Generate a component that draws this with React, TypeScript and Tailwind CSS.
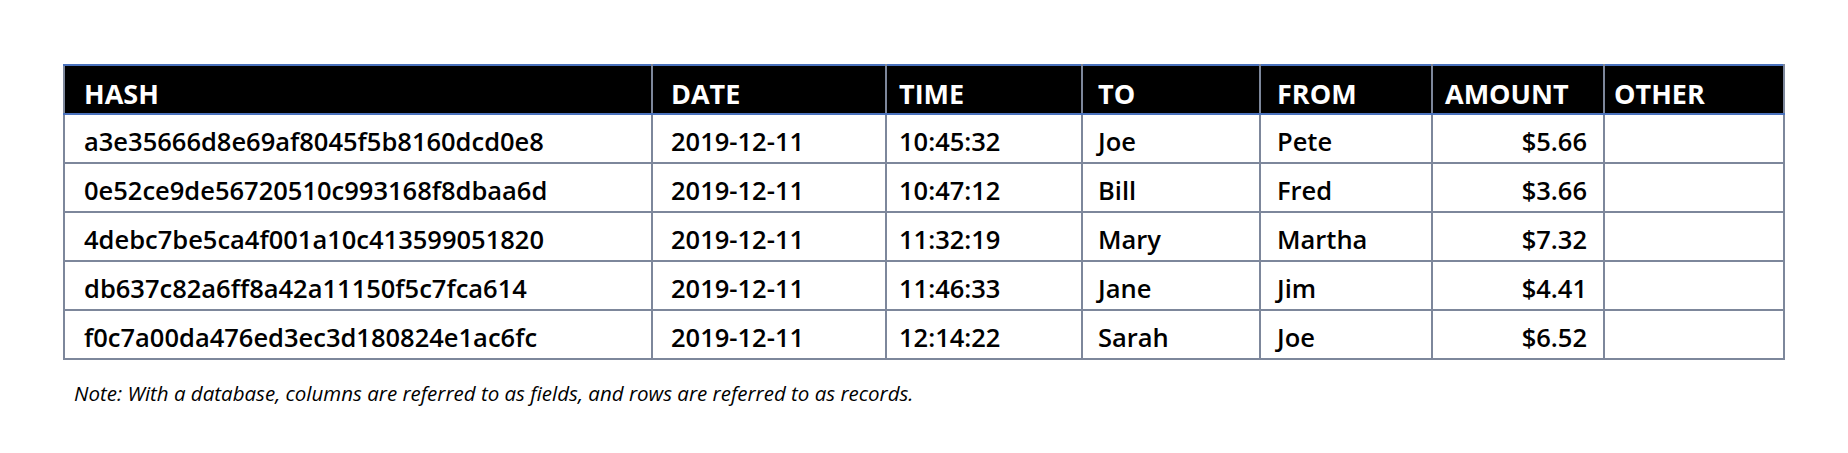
import React from "react";

const rows = [
    { hash: "a3e35666d8e69af8045f5b8160dcd0e8", date: "2019-12-11", time: "10:45:32", to: "Joe", from: "Pete", amount: "$5.66" },
    { hash: "0e52ce9de56720510c993168f8dbaa6d", date: "2019-12-11", time: "10:47:12", to: "Bill", from: "Fred", amount: "$3.66" },
    { hash: "4debc7be5ca4f001a10c413599051820", date: "2019-12-11", time: "11:32:19", to: "Mary", from: "Martha", amount: "$7.32" },
    { hash: "db637c82a6ff8a42a11150f5c7fca614", date: "2019-12-11", time: "11:46:33", to: "Jane", from: "Jim", amount: "$4.41" },
    { hash: "f0c7a00da476ed3ec3d180824e1ac6fc", date: "2019-12-11", time: "12:14:22", to: "Sarah", from: "Joe", amount: "$6.52" },
];

// header label + left padding per column
const headers = [
    { label: "HASH", pad: "pl-[19px]" },
    { label: "DATE", pad: "pl-[18px]" },
    { label: "TIME", pad: "pl-[12px]" },
    { label: "TO", pad: "pl-[15px]" },
    { label: "FROM", pad: "pl-[16px]" },
    { label: "AMOUNT", pad: "pl-[12px]" },
    { label: "OTHER", pad: "pl-[9px]" },
];

const cell = "border-2 border-[#7d879b] pt-[7px]";

export default function App() {
    return (
        <div className="w-[1848px] h-[453px] bg-white pt-[64px] pl-[63px] font-['Open_Sans',sans-serif] text-black">
            <table className="table-fixed border-collapse w-[1720px]">
                <colgroup>
                    <col className="w-[588px]" />
                    <col className="w-[234px]" />
                    <col className="w-[196px]" />
                    <col className="w-[178px]" />
                    <col className="w-[172px]" />
                    <col className="w-[172px]" />
                    <col className="w-[180px]" />
                </colgroup>
                <thead>
                    <tr className="bg-black text-white h-[49px]">
                        {headers.map((h) => (
                            <th
                                key={h.label}
                                className={`border-2 border-[#7d879b] border-t-[#4a72bd] border-b-[#4a72bd] text-[27px] font-bold leading-none text-left align-middle pt-[8px] ${h.pad}`}
                            >
                                {h.label}
                            </th>
                        ))}
                    </tr>
                </thead>
                <tbody>
                    {rows.map((r) => (
                        <tr key={r.hash} className="h-[49px] text-[25.5px] font-semibold leading-none">
                            <td className={`${cell} pl-[19px]`}>{r.hash}</td>
                            <td className={`${cell} pl-[18px]`}>{r.date}</td>
                            <td className={`${cell} pl-[12px]`}>{r.time}</td>
                            <td className={`${cell} pl-[15px]`}>{r.to}</td>
                            <td className={`${cell} pl-[16px]`}>{r.from}</td>
                            <td className={`${cell} pr-[16px] text-right`}>{r.amount}</td>
                            <td className={cell}></td>
                        </tr>
                    ))}
                </tbody>
            </table>
            <p className="mt-[18px] ml-[11px] text-[20.5px] italic">
                Note: With a database, columns are referred to as fields, and rows are referred to as records.
            </p>
        </div>
    );
}
